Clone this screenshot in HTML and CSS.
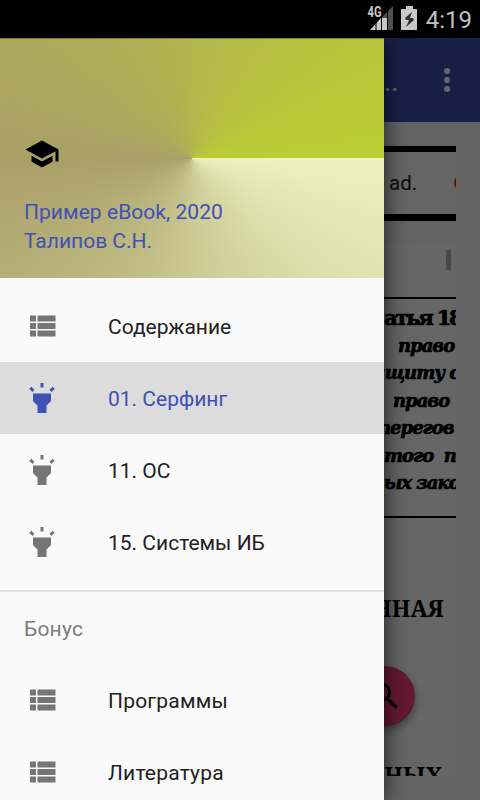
FILE: index.html
```html
<!DOCTYPE html>
<html lang="ru">
<head>
<meta charset="utf-8">
<title>Пример eBook</title>
<link rel="stylesheet" href="styles.css">
</head>
<body>
<svg width="0" height="0" class="defs">
  <symbol id="list" viewBox="0 0 24 24"><path d="M4 14h4v-4H4v4zm0 5h4v-4H4v4zM4 9h4V5H4v4zm5 5h12v-4H9v4zm0 5h12v-4H9v4zM9 5v4h12V5H9z"/></symbol>
  <symbol id="torch" viewBox="0 0 24 24"><path d="M6 14l3 3v5h6v-5l3-3V9H6zM11 2h2v3h-2zM3.5 5.88l1.41-1.41 2.12 2.12L5.62 8zM16.96 6.58l2.12-2.12 1.41 1.41L18.38 8z"/></symbol>
</svg>
<div class="screen">
  <header class="status">
    <svg class="signal" width="27" height="26" viewBox="0 0 27 26">
      <path fill="#505050" d="M26 0v24H14V12z"/>
      <path fill="#c8c8c8" d="M14 12h6v12H3z"/>
      <path stroke="#000" d="M9 14v12M14.500 11v15M20.500 5v21"/>
      <text x="0.500" y="11" class="net" textLength="14" lengthAdjust="spacingAndGlyphs">4G</text>
    </svg>
    <svg class="battery" width="16" height="24" viewBox="0 0 16 24">
      <path fill="#c8c8c8" d="M5 0h7v3h4v21H0V3h5z"/>
      <path fill="#303030" d="M11 6L4 12l1 2h3l-3 7 8-7-1-2H9z"/>
    </svg>
    <span class="clock">4:19</span>
  </header>
  <main class="app">
    <div class="toolbar">
      <span class="ellipsis">..</span>
      <div class="more"><i></i><i></i><i></i></div>
    </div>
    <div class="page">
      <div class="ad"><span>ad.</span><i class="ad-dot"></i></div>
      <div class="web">
        <div class="thumb"></div>
        <div class="article">
          <p class="heading">атья 18</p>
          <p class="l1">право</p>
          <p class="l2">ащиту с</p>
          <p class="l3">право</p>
          <p class="l4">перегов</p>
          <p class="l5">того&nbsp; п</p>
          <p class="l6">ых зако</p>
        </div>
        <p class="caption">ННАЯ</p>
        <p class="caption last">СНЫХ</p>
      </div>
    </div>
    <div class="fab"><svg width="36" height="36" viewBox="0 0 24 24"><path d="M15.500 14h-.79l-.28-.27A6.471 6.471 0 0 0 16 9.500 6.500 6.500 0 1 0 9.500 16c1.610 0 3.090-.59 4.230-1.570l.27.28v.79l5 4.990L20.490 19l-4.990-5zm-6 0C7.010 14 5 11.990 5 9.500S7.010 5 9.500 5 14 7.010 14 9.500 11.990 14 9.500 14z"/></svg></div>
    <div class="scrim"></div>
    <nav class="drawer">
      <div class="hero">
        <svg class="school" width="36" height="36" viewBox="0 0 24 24"><path d="M5 13.180v4L12 21l7-3.820v-4L12 17l-7-3.820zM12 3L1 9l11 6 9-4.910V17h2V9L12 3z"/></svg>
        <div class="title">Пример eBook, 2020</div>
        <div class="author">Талипов С.Н.</div>
      </div>
      <div class="menu">
        <a class="item"><svg class="icon"><use href="#list"/></svg><span>Содержание</span></a>
        <a class="item active"><svg class="icon"><use href="#torch"/></svg><span>01. Серфинг</span></a>
        <a class="item"><svg class="icon"><use href="#torch"/></svg><span>11. ОС</span></a>
        <a class="item"><svg class="icon"><use href="#torch"/></svg><span>15. Системы ИБ</span></a>
        <div class="divider"></div>
        <div class="subheader">Бонус</div>
        <a class="item"><svg class="icon"><use href="#list"/></svg><span class="wide">Программы</span></a>
        <a class="item"><svg class="icon"><use href="#list"/></svg><span class="wide">Литература</span></a>
      </div>
    </nav>
  </main>
</div>
</body>
</html>
```

FILE: styles.css
```css
* { box-sizing: border-box; }
body { margin: 0; font-family: Roboto, "Liberation Sans", sans-serif; }
p { margin: 0; }
.defs { position: absolute; }
.screen { width: 480px; height: 800px; overflow: hidden; background: #fafafa; }

.status { height: 38px; background: #000; display: flex; align-items: flex-start; padding: 6px 8px 0 0; justify-content: flex-end; }
.signal { margin: 0 7px 0 0; }
.net { font: bold 14.500px Roboto, sans-serif; fill: #c8c8c8; }
.clock { margin-left: 9px; font-size: 24px; line-height: 28px; color: #c0c0c0; }

.app { position: relative; height: 762px; overflow: hidden; }
.toolbar { height: 84px; background: #3f51b5; display: flex; align-items: center; justify-content: space-between; padding: 0 30px 0 384px; color: #fff; }
.ellipsis { font-size: 26px; line-height: 28px; font-weight: 500; padding-top: 4px; }
.more { display: flex; flex-direction: column; gap: 3px; }
.more i { width: 6px; height: 6px; border-radius: 50%; background: #fff; }

.page { margin: 24px 24px 0 384px; height: 630px; overflow: hidden; white-space: nowrap; }
.ad { height: 75px; border: solid #000; border-width: 6px 0 7px; background: #fff; display: flex; align-items: center; justify-content: space-between; padding-left: 5px; font-size: 20.500px; color: #202124; overflow: hidden; }
.ad-dot { width: 18px; height: 18px; border-radius: 50%; background: #f03a22; margin-right: -16px; flex: none; }
.web { margin-top: 24px; height: 531px; background: #fff; overflow: hidden; color: #000; }
.thumb { width: 5px; height: 20px; margin: 5px 5px 27px auto; background: #b4b4b4; }
.article { height: 221px; border: solid #000; border-width: 2px 0; padding-top: 5px; font-family: "DejaVu Serif", serif; font-size: 18px; font-weight: bold; font-style: italic; line-height: 27.500px; letter-spacing: -1px; -webkit-text-stroke: .7px #000; }
.article .heading { font-style: normal; font-size: 21px; letter-spacing: -2.200px; }
.l1 { padding-left: 14px; }
.l2 { margin-left: -10px; }
.l3 { padding-left: 9px; }
.l4 { margin-left: -6px; }
.caption { margin: 74px 0 0 -11px; font-family: "Noto Serif", "Liberation Serif", serif; font-size: 23px; line-height: 32px; font-weight: bold; }
.caption.last { margin: 135px 0 0 -15px; }

.fab { position: absolute; left: 355px; top: 628px; width: 60px; height: 60px; display: flex; align-items: center; justify-content: center; border-radius: 50%; background: #ff4081; box-shadow: 0 4px 8px rgba(0,0,0,.4); }
.scrim { position: absolute; inset: 0; background: rgba(0,0,0,.6); }

.drawer { position: absolute; left: 0; top: 0; width: 384px; height: 762px; background: #fafafa; box-shadow: 0 0 22px rgba(0,0,0,.75); }
.hero { height: 240px; padding: 97px 24px 0; background: conic-gradient(from 90deg, #edf1c0, #a9a067 50%, #bccd32); color: #3f51b5; font-size: 21px; line-height: 29px; border-top: 1px solid #7f8035; }
.school { display: block; margin: 0 0 26px; }
.title { letter-spacing: .05px; }
.menu { padding-top: 12px; }
.item { height: 72px; display: flex; align-items: center; padding-left: 24px; gap: 48px; font-size: 21px; color: #212121; }
.item span { padding-top: 2px; }
.item .wide { letter-spacing: .2px; }
.icon { width: 36px; height: 36px; fill: #757575; }
.active { background: #dcdcdc; color: #3f51b5; }
.active .icon { fill: #3f51b5; }
.divider { height: 2px; margin-top: 12px; background: #e0e0e0; }
.subheader { height: 72px; padding: 1px 24px 0; line-height: 72px; font-size: 21px; letter-spacing: .2px; color: #7c7c7c; }
```
